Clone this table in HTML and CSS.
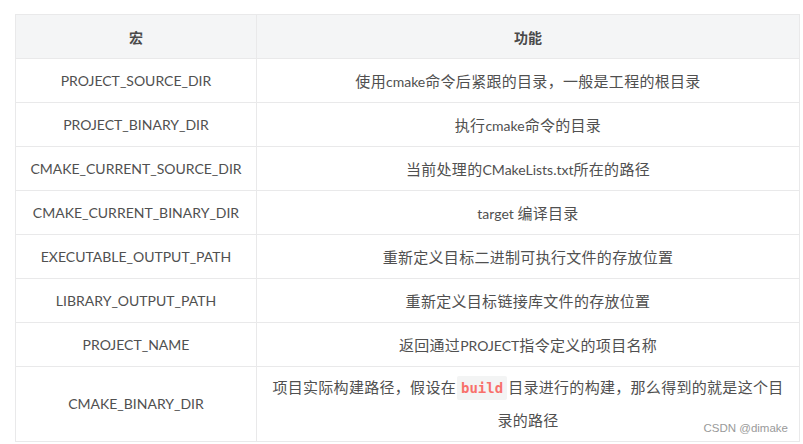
FILE: index.html
```html
<!DOCTYPE html>
<html lang="zh-CN">
<head>
<meta charset="utf-8">
<link rel="stylesheet" href="styles.css">
</head>
<body>
<div class="wrap">
  <table class="macro-table">
    <thead>
      <tr><th class="c1">宏</th><th class="c2">功能</th></tr>
    </thead>
    <tbody>
      <tr><td class="c1">PROJECT_SOURCE_DIR</td><td class="c2">使用<span class="en">cmake</span>命令后紧跟的目录，一般是工程的根目录</td></tr>
      <tr><td class="c1">PROJECT_BINARY_DIR</td><td class="c2">执行<span class="en">cmake</span>命令的目录</td></tr>
      <tr><td class="c1">CMAKE_CURRENT_SOURCE_DIR</td><td class="c2">当前处理的<span class="en">CMakeLists.txt</span>所在的路径</td></tr>
      <tr><td class="c1">CMAKE_CURRENT_BINARY_DIR</td><td class="c2"><span class="en">target</span> 编译目录</td></tr>
      <tr><td class="c1">EXECUTABLE_OUTPUT_PATH</td><td class="c2">重新定义目标二进制可执行文件的存放位置</td></tr>
      <tr><td class="c1">LIBRARY_OUTPUT_PATH</td><td class="c2">重新定义目标链接库文件的存放位置</td></tr>
      <tr><td class="c1">PROJECT_NAME</td><td class="c2">返回通过<span class="en">PROJECT</span>指令定义的项目名称</td></tr>
      <tr class="tall"><td class="c1">CMAKE_BINARY_DIR</td><td class="c2">项目实际构建路径，假设在<code class="code">build</code>目录进行的构建，那么得到的就是这个目录的路径</td></tr>
    </tbody>
  </table>
  <div class="watermark">CSDN @dimake</div>
</div>
</body>
</html>
```

FILE: styles.css
```css
html, body {
  margin: 0;
  padding: 0;
  background: #ffffff;
}
.wrap {
  position: relative;
  padding: 14px 3px 0 15px;
  width: 785px;
}
.macro-table {
  border-collapse: collapse;
  width: 785px;
  table-layout: fixed;
  font-family: "Noto Sans CJK SC", "Open Sans", sans-serif;
  font-size: 15px;
  color: #505050;
}
.macro-table th,
.macro-table td {
  border: 1px solid #e9e9ea;
  text-align: center;
  height: 44px;
  padding: 0 12px;
  box-sizing: border-box;
}
.macro-table th {
  background: #f4f5f6;
  font-weight: 700;
  font-size: 14px;
  color: #4a4a4a;
}
.macro-table th.c1 {
  width: 241px;
}
.macro-table td.c1 {
  font-family: "Lato", "Noto Sans CJK SC", sans-serif;
  font-size: 14px;
  padding: 0 8px;
}
.macro-table td.c2 {
  letter-spacing: 0.3px;
}
.en {
  font-family: "Lato", "Noto Sans CJK SC", sans-serif;
  font-size: 14px;
  letter-spacing: 0;
}
.macro-table tr.tall td {
  height: 73px;
  line-height: 31px;
  padding-top: 4px;
  padding-bottom: 6px;
}
.code {
  font-family: "DejaVu Sans Mono", "Liberation Mono", monospace;
  font-weight: 700;
  font-size: 14px;
  letter-spacing: 0;
  color: #f8706b;
  background: #f3f4f4;
  padding: 4px 4px;
  margin: 0 1px;
  border-radius: 2px;
}
.watermark {
  position: absolute;
  right: 15px;
  top: 422px;
  font-family: "Liberation Sans", Arial, sans-serif;
  font-size: 11.5px;
  color: #9a9a9a;
}
```
